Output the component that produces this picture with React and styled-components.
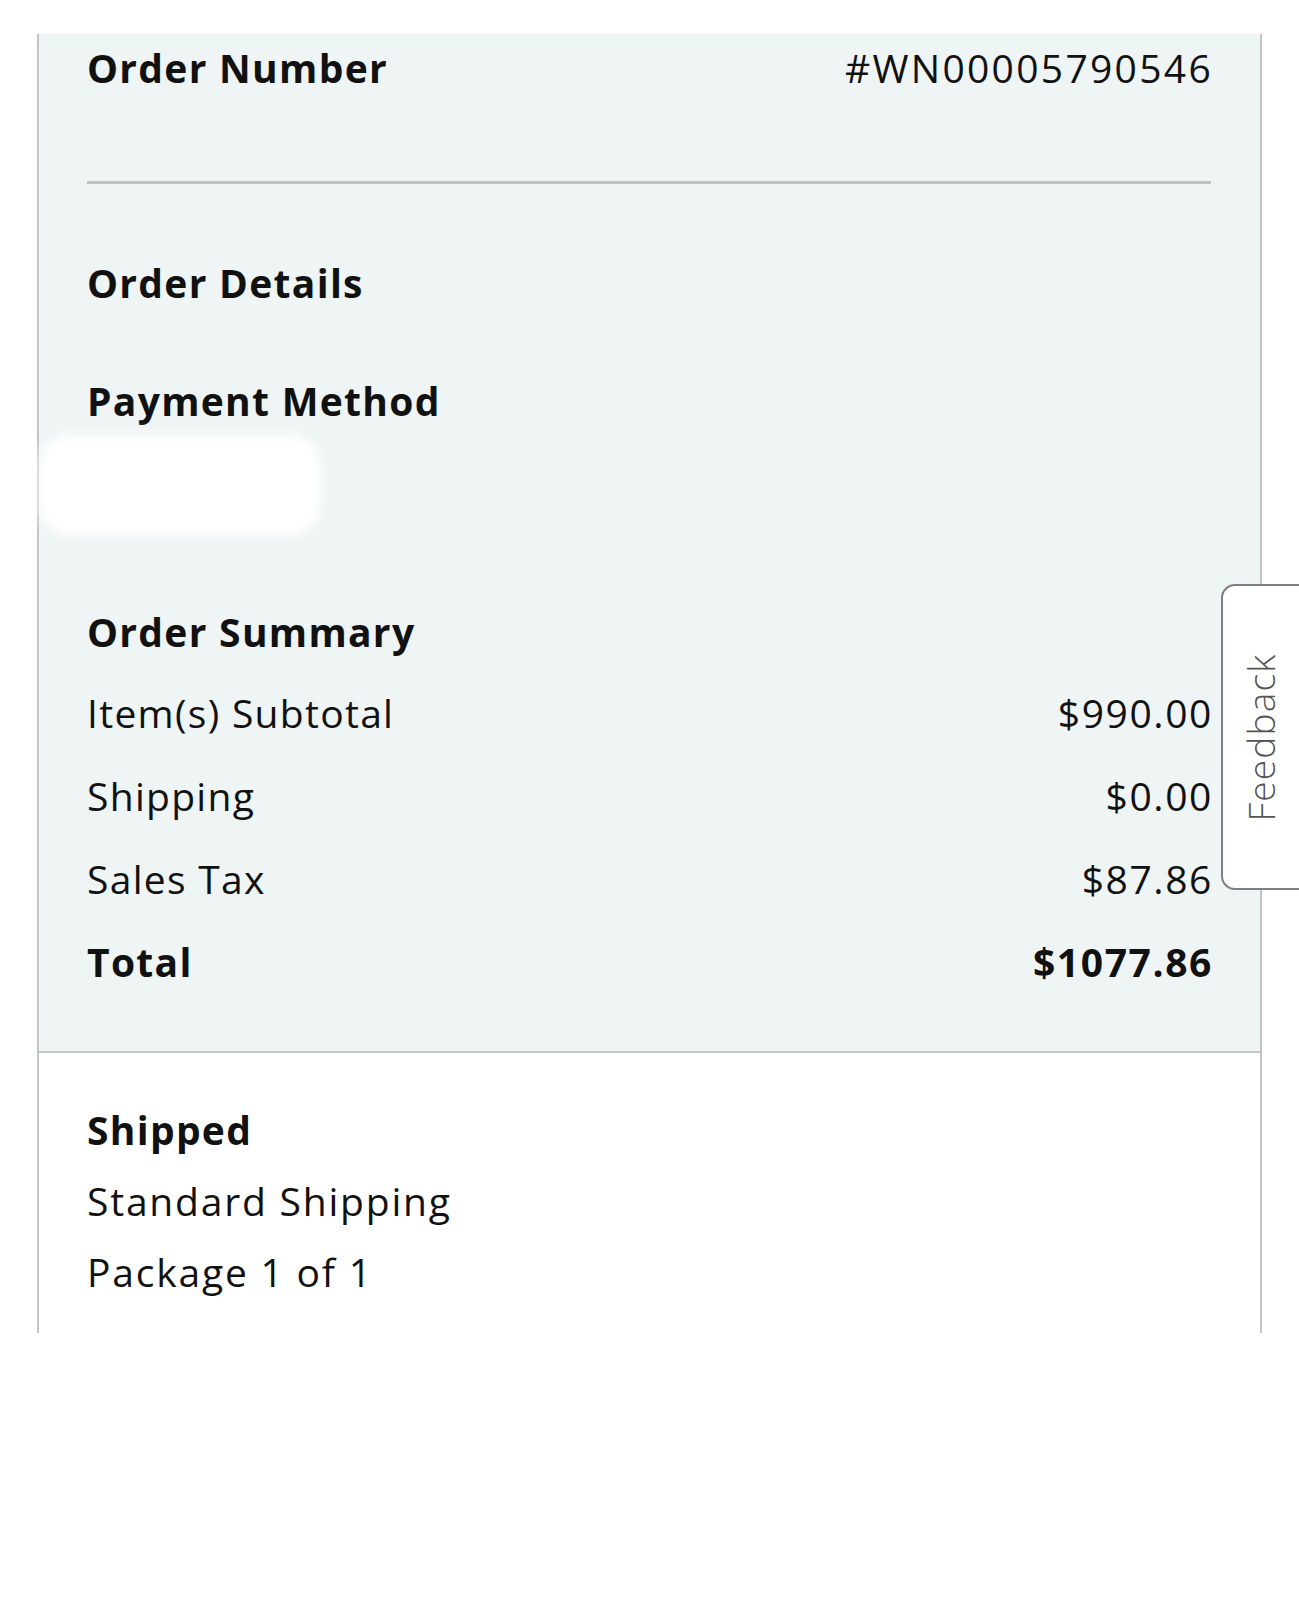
import React from "react"
import styled, { createGlobalStyle } from "styled-components"

const GlobalStyle = createGlobalStyle`
  body {
    margin: 0;
    background: #fff;
    font-family: "Open Sans", Lato, sans-serif;
    color: #111;
  }
`

const Page = styled.div`
  position: relative;
  width: 1299px;
  height: 1600px;
  padding: 34px 0 0 37px;
  box-sizing: border-box;
`

const Card = styled.div`
  width: 1225px;
  border-left: 2px solid #c2c4c5;
  border-right: 2px solid #c2c4c5;
  box-sizing: border-box;
`

const Summary = styled.section`
  background: #eff4f5;
  border-bottom: 2px solid #c2c4c5;
  padding: 5px 49px 48px 48px;
`

const Shipment = styled.section`
  padding: 41px 49px 26px 48px;
`

const Row = styled.div`
  display: flex;
  justify-content: space-between;
  align-items: center;
  height: ${(p) => p.$h || 83}px;
  font-size: 39px;
  letter-spacing: 1.3px;
  font-weight: ${(p) => (p.$bold ? 700 : 400)};
`

const Amount = styled.span`
  letter-spacing: ${(p) => (p.$wide ? 2.3 : 1.6)}px;
  margin-right: -2px;
`

const Heading = styled.h3`
  margin: ${(p) => p.$mt || 0}px 0 0;
  font-size: 39px;
  font-weight: 700;
  letter-spacing: 1.3px;
  line-height: ${(p) => p.$lh || 56}px;
`

const Line = styled.p`
  margin: 0;
  font-size: 39px;
  letter-spacing: 1.8px;
  line-height: 71px;
`

const Divider = styled.hr`
  margin: 86px 0 0;
  border: 0;
  height: 3px;
  background: #bfc3c4;
`

const Redacted = styled.div`
  margin: 5px 0 0 -48px;
  width: 282px;
  height: 102px;
  background: #fff;
  border-radius: 30px;
  filter: blur(6px);
`

const Rows = styled.div`
  margin-top: 11px;
`

const Feedback = styled.button`
  position: absolute;
  top: 584px;
  right: 0;
  width: 78px;
  height: 306px;
  padding: 0;
  background: #fff;
  border: 2px solid #7d7f80;
  border-right: 0;
  border-radius: 14px 0 0 14px;
  display: flex;
  align-items: center;
  justify-content: center;
  font-family: "Open Sans", Lato, sans-serif;
  cursor: pointer;
`

const FeedbackLabel = styled.span`
  transform: rotate(-90deg);
  font-size: 37px;
  font-weight: 300;
  letter-spacing: 1.2px;
  color: #555;
  white-space: nowrap;
`

const lines = [
  ["Item(s) Subtotal", "$990.00"],
  ["Shipping", "$0.00"],
  ["Sales Tax", "$87.86"],
]

const App = () => {
  return (
    <>
      <GlobalStyle />
      <Page>
        <Card>
          <Summary>
            <Row $h={56}>
              <strong>Order Number</strong>
              <Amount $wide>#WN00005790546</Amount>
            </Row>
            <Divider />
            <Heading $mt={71}>Order Details</Heading>
            <Heading $mt={62}>Payment Method</Heading>
            <Redacted />
            <Heading $mt={68}>Order Summary</Heading>
            <Rows>
              {lines.map(([label, value]) => (
                <Row key={label}>
                  <span>{label}</span>
                  <Amount>{value}</Amount>
                </Row>
              ))}
              <Row $bold>
                <span>Total</span>
                <Amount>$1077.86</Amount>
              </Row>
            </Rows>
          </Summary>
          <Shipment>
            <Heading $lh={71}>Shipped</Heading>
            <Line>Standard Shipping</Line>
            <Line>Package 1 of 1</Line>
          </Shipment>
        </Card>
        <Feedback>
          <FeedbackLabel>Feedback</FeedbackLabel>
        </Feedback>
      </Page>
    </>
  )
}

export default App
